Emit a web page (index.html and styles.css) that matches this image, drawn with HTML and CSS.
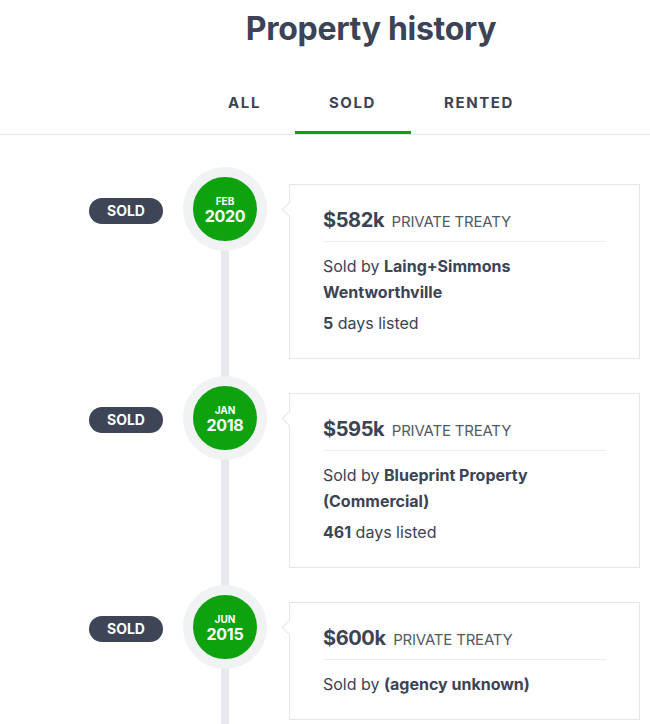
FILE: index.html
```
<!DOCTYPE html>
<html lang="en">
<head>
    <meta charset="UTF-8">
    <meta name="viewport" content="width=device-width, initial-scale=1.0">
    <title>Property history</title>
    <link rel="stylesheet" href="styles.css">
</head>
<body>
    <div class="header">
        <h1 class="title">Property history</h1>
    </div>
    <div class="tabs">
        <div class="tab tab-all">ALL</div>
        <div class="tab tab-sold active">SOLD</div>
        <div class="tab tab-rented">RENTED</div>
    </div>

    <div class="timeline">
        <div class="entry">
            <div class="entry-label"><span class="pill">SOLD</span></div>
            <div class="entry-track">
                <div class="date-badge">
                    <span class="month">FEB</span>
                    <span class="year">2020</span>
                </div>
            </div>
            <div class="card">
                <div class="card-price">
                    <span class="price">$582k</span>
                    <span class="method">PRIVATE TREATY</span>
                </div>
                <p class="agent">Sold by <strong>Laing+Simmons Wentworthville</strong></p>
                <p class="days"><strong>5</strong> days listed</p>
            </div>
        </div>

        <div class="entry">
            <div class="entry-label"><span class="pill">SOLD</span></div>
            <div class="entry-track">
                <div class="date-badge">
                    <span class="month">JAN</span>
                    <span class="year">2018</span>
                </div>
            </div>
            <div class="card">
                <div class="card-price">
                    <span class="price">$595k</span>
                    <span class="method">PRIVATE TREATY</span>
                </div>
                <p class="agent">Sold by <strong>Blueprint Property (Commercial)</strong></p>
                <p class="days"><strong>461</strong> days listed</p>
            </div>
        </div>

        <div class="entry">
            <div class="entry-label"><span class="pill">SOLD</span></div>
            <div class="entry-track">
                <div class="date-badge">
                    <span class="month">JUN</span>
                    <span class="year">2015</span>
                </div>
            </div>
            <div class="card">
                <div class="card-price">
                    <span class="price">$600k</span>
                    <span class="method">PRIVATE TREATY</span>
                </div>
                <p class="agent">Sold by <strong>(agency unknown)</strong></p>
            </div>
        </div>
    </div>
</body>
</html>
```

FILE: styles.css
```
:root {
    --text-color: #3b4354;
    --muted-text: #525965;
    --green: #0ea30e;
    --border-color: #e4e6e9;
    --track-color: #e8e9ec;
    --ring-color: #f0f2f4;
}

body {
    font-family: Inter, "Open Sans", sans-serif;
    color: var(--text-color);
    background-color: #fff;
    margin: 0;
}

.header {
    padding: 9px 0 0 92px;
    text-align: center;
}

.title {
    font-size: 32px;
    line-height: 40px;
    font-weight: 700;
    margin: 0;
    letter-spacing: -0.3px;
}

.tabs {
    display: flex;
    justify-content: center;
    padding-left: 92px;
    margin-top: 23px;
    border-bottom: 1px solid #e6e6e6;
}

.tab {
    font-size: 15px;
    line-height: 18px;
    font-weight: 700;
    letter-spacing: 1.6px;
    text-align: center;
    padding: 22px 0 19px;
    border-bottom: 3px solid transparent;
}

.tab-all {
    width: 100px;
}

.tab-sold {
    width: 116px;
}

.tab-rented {
    width: 137px;
}

.tab.active {
    border-bottom-color: var(--green);
}

.timeline {
    padding-top: 32px;
}

.entry {
    display: grid;
    grid-template-columns: 183px 84px 1fr;
    align-items: start;
}

.entry-label {
    display: flex;
    justify-content: flex-end;
    padding: 31px 20px 0 0;
}

.pill {
    background-color: #3d4557;
    color: #fff;
    font-size: 14px;
    line-height: 26px;
    font-weight: 700;
    width: 74px;
    text-align: center;
    border-radius: 13px;
}

.entry-track {
    align-self: stretch;
    background: linear-gradient(var(--track-color), var(--track-color)) center bottom / 8px 100% no-repeat;
}

.entry:first-child .entry-track {
    background-size: 8px calc(100% - 42px);
}

.date-badge {
    width: 64px;
    height: 64px;
    border: 10px solid var(--ring-color);
    border-radius: 50%;
    background-color: var(--green);
    color: #fff;
    display: flex;
    flex-direction: column;
    align-items: center;
    justify-content: center;
    font-weight: 700;
}

.month {
    font-size: 10px;
    line-height: 12px;
    margin-top: 2px;
}

.year {
    font-size: 16px;
    line-height: 18px;
    letter-spacing: -0.3px;
}

.card {
    position: relative;
    margin: 17px 10px 17px 22px;
    border: 1px solid var(--border-color);
    padding: 21px 33px 22px 33px;
    background-color: #fff;
}

.card::before {
    content: "";
    position: absolute;
    left: -6px;
    top: 19px;
    width: 10px;
    height: 10px;
    background-color: #fff;
    border-left: 1px solid var(--border-color);
    border-bottom: 1px solid var(--border-color);
    transform: rotate(45deg);
}

.card-price {
    line-height: 28px;
    padding-bottom: 5px;
    border-bottom: 1px solid #eceef0;
}

.price {
    font-size: 20px;
    font-weight: 700;
    letter-spacing: -0.4px;
}

.method {
    font-size: 15px;
    color: var(--muted-text);
    margin-left: 3px;
    letter-spacing: -0.2px;
}

.agent {
    font-size: 16px;
    line-height: 26px;
    margin: 11px 0 0;
    font-weight: 400;
}

.days {
    font-size: 16px;
    line-height: 26px;
    margin: 5px 0 0;
}

strong {
    font-weight: 700;
}
```
